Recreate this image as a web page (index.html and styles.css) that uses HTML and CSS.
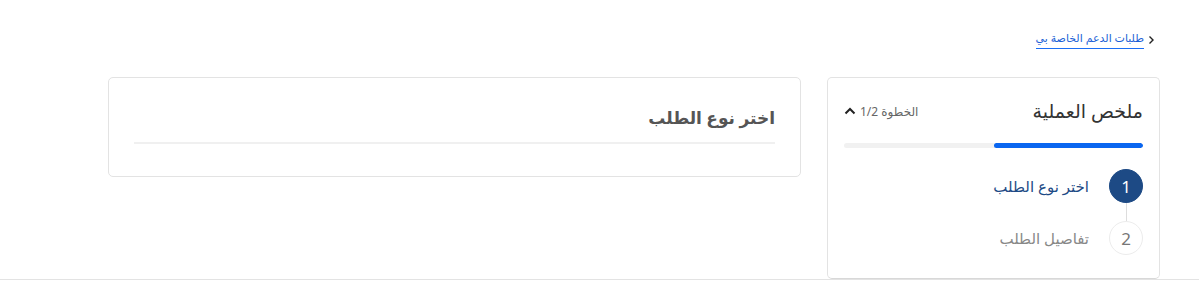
FILE: index.html
```html
<!DOCTYPE html>
<html lang="ar" dir="rtl">
<head>
    <meta charset="UTF-8">
    <meta name="viewport" content="width=device-width, initial-scale=1.0">
    <title>طلبات الدعم الخاصة بي</title>
    <link rel="stylesheet" href="styles.css">
</head>
<body>
    <div class="page">
        <nav class="breadcrumb">
            <span class="crumb-arrow">
                <svg width="8" height="10" viewBox="0 0 8 10"><path d="M2.5 1.5 L6 5 L2.5 8.5" fill="none" stroke="#222" stroke-width="1.4"/></svg>
            </span>
            <a href="#" class="crumb-link">طلبات الدعم الخاصة بي</a>
        </nav>

        <div class="layout">
            <aside class="summary">
                <div class="summary-head">
                    <h3>ملخص العملية</h3>
                    <div class="step-count">
                        <span>الخطوة 1/2</span>
                        <svg width="12" height="8" viewBox="0 0 12 8"><path d="M1.5 6.5 L6 2 L10.5 6.5" fill="none" stroke="#222" stroke-width="2"/></svg>
                    </div>
                </div>
                <div class="progress"><div class="progress-fill" style="width: 50%"></div></div>
                <ul class="steps">
                    <li class="step active">
                        <span class="step-num">1</span>
                        <span class="step-label">اختر نوع الطلب</span>
                    </li>
                    <li class="step-line"></li>
                    <li class="step">
                        <span class="step-num">2</span>
                        <span class="step-label">تفاصيل الطلب</span>
                    </li>
                </ul>
            </aside>

            <section class="main-card">
                <h2>اختر نوع الطلب</h2>
                <div class="divider"></div>
            </section>
        </div>
    </div>
    <div class="footer-line"></div>
</body>
</html>
```

FILE: styles.css
```css
body {
    margin: 0;
    font-family: "Noto Sans", "DejaVu Sans", sans-serif;
    background: #fff;
    color: #333;
}
.page {
    padding: 0 39px 0 108px;
    height: 279px;
    box-sizing: border-box;
}
.breadcrumb {
    display: flex;
    align-items: center;
    gap: 3px;
    padding: 27px 5px 0 0;
    height: 50px;
    box-sizing: border-box;
}
.crumb-arrow {
    display: flex;
    margin-top: 2px;
}
.crumb-link {
    color: #1b5fd6;
    font-size: 11px;
    text-decoration: none;
    border-bottom: 1px solid #1b6ef5;
    line-height: 18px;
    padding-bottom: 1px;
}
.layout {
    display: flex;
    gap: 26px;
    margin-top: 27px;
    align-items: flex-start;
}
.summary {
    width: 333px;
    height: 202px;
    box-sizing: border-box;
    border: 1px solid #e3e3e3;
    border-bottom-color: #d8d8d8;
    border-radius: 5px;
    padding: 20px 16px 0 16px;
}
.summary-head {
    display: flex;
    justify-content: space-between;
    align-items: center;
    height: 26px;
}
.summary-head h3 {
    margin: 0;
    font-size: 19px;
    font-weight: 400;
    color: #333;
}
.step-count {
    display: flex;
    align-items: center;
    gap: 4px;
    font-size: 12px;
    color: #666;
}
.progress {
    margin-top: 19px;
    height: 5px;
    background: #f1f1f1;
    border-radius: 3px;
    overflow: hidden;
}
.progress-fill {
    height: 100%;
    background: #0a66f0;
    border-radius: 3px;
}
.steps {
    list-style: none;
    margin: 21px 0 0 0;
    padding: 0;
}
.step {
    display: flex;
    align-items: center;
    gap: 20px;
}
.step-num {
    width: 32px;
    height: 32px;
    border-radius: 50%;
    border: 1px solid #ececec;
    display: flex;
    align-items: center;
    justify-content: center;
    font-size: 17px;
    color: #777;
    background: #fff;
}
.step.active .step-num {
    background: #1d4a85;
    border-color: #1d4a85;
    color: #fff;
}
.step-label {
    font-size: 15px;
    color: #888;
}
.step.active .step-label {
    color: #1d4a85;
}
.step-line {
    width: 1px;
    height: 18px;
    background: #ddd;
    margin-right: 16px;
}
.main-card {
    flex: 1;
    height: 100px;
    box-sizing: border-box;
    border: 1px solid #e3e3e3;
    border-radius: 5px;
    padding: 26px 25px 0 25px;
}
.main-card h2 {
    margin: 0;
    font-size: 17px;
    font-weight: 600;
    color: #555;
    line-height: 28px;
}
.divider {
    margin-top: 10px;
    height: 2px;
    background: #f0f0f0;
}
.footer-line {
    height: 1px;
    background: #e3e3e3;
}
```
